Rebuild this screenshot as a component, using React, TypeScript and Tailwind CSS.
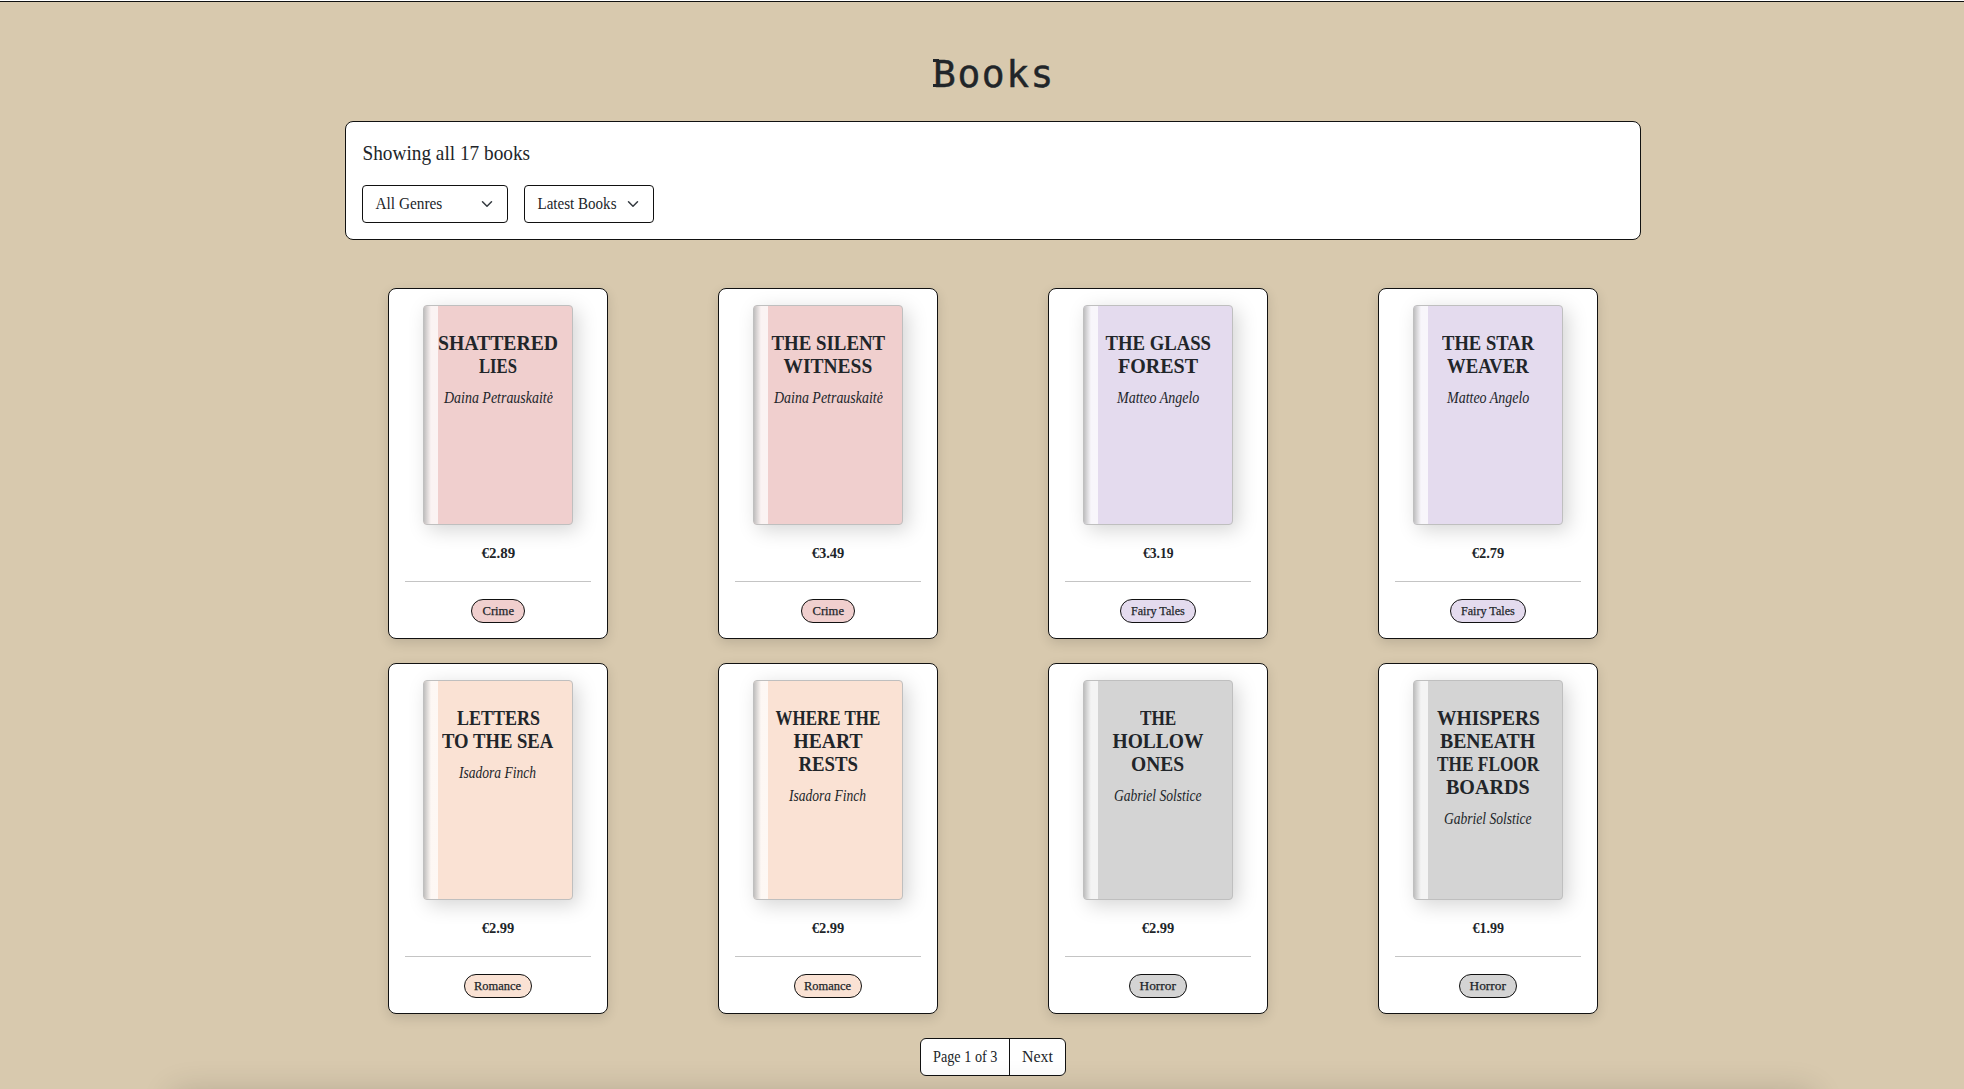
import { useLayoutEffect, useRef, useState } from 'react';

type Line = [text: string, width: number];

type Book = {
  title: Line[];
  author: Line;
  price: Line;
  genre: 'Crime' | 'Fairy Tales' | 'Romance' | 'Horror';
};

const genres = {
  Crime: { bg: 'bg-[#f0cfce]', pill: 'w-[54px]', text: 32 },
  'Fairy Tales': { bg: 'bg-[#e4dbee]', pill: 'w-[76px]', text: 54 },
  Romance: { bg: 'bg-[#fae2d4]', pill: 'w-[68px]', text: 47 },
  Horror: { bg: 'bg-[#d4d4d4]', pill: 'w-[58px]', text: 36 },
};

const books: Book[] = [
  { title: [['Shattered', 120], ['Lies', 38]], author: ['Daina Petrauskaitė', 109], price: ['€2.89', 34], genre: 'Crime' },
  { title: [['The Silent', 114], ['Witness', 89]], author: ['Daina Petrauskaitė', 109], price: ['€3.49', 33], genre: 'Crime' },
  { title: [['The Glass', 105], ['Forest', 80]], author: ['Matteo Angelo', 82], price: ['€3.19', 31], genre: 'Fairy Tales' },
  { title: [['The Star', 92], ['Weaver', 82]], author: ['Matteo Angelo', 82], price: ['€2.79', 33], genre: 'Fairy Tales' },
  { title: [['Letters', 83], ['to the Sea', 111]], author: ['Isadora Finch', 77], price: ['€2.99', 33], genre: 'Romance' },
  { title: [['Where the', 105], ['Heart', 69], ['Rests', 60]], author: ['Isadora Finch', 77], price: ['€2.99', 33], genre: 'Romance' },
  { title: [['The', 36], ['Hollow', 91], ['Ones', 53]], author: ['Gabriel Solstice', 88], price: ['€2.99', 33], genre: 'Horror' },
  {
    title: [['Whispers', 103], ['Beneath', 95], ['the Floor', 102], ['Boards', 84]],
    author: ['Gabriel Solstice', 88],
    price: ['€1.99', 32],
    genre: 'Horror',
  },
];

/** Single line of text condensed or widened to a given measure. */
function Fit({ text, width }: { text: string; width: number }) {
  const ref = useRef<HTMLSpanElement>(null);
  const [scale, setScale] = useState(1);
  useLayoutEffect(() => {
    if (ref.current) setScale(width / ref.current.offsetWidth);
  }, [text, width]);
  return (
    <span className="flex justify-center" style={{ width }}>
      <span ref={ref} className="inline-block shrink-0 whitespace-nowrap" style={{ transform: `scaleX(${scale})` }}>
        {text}
      </span>
    </span>
  );
}

function Select({ label, width, className }: { label: string; width: number; className: string }) {
  return (
    <button className={`flex h-[38px] items-center justify-between rounded border border-[#111] bg-white pr-3 pl-3 text-[16px] leading-6 ${className}`}>
      <Fit text={label} width={width} />
      <svg className="h-3 w-4" viewBox="0 0 16 16" fill="none" stroke="#343a40" strokeWidth="2" strokeLinecap="round" strokeLinejoin="round">
        <path d="m2 5 6 6 6-6" />
      </svg>
    </button>
  );
}

function Card({ book }: { book: Book }) {
  const genre = genres[book.genre];
  return (
    <article className="flex h-[351px] w-[220px] flex-col items-center rounded-lg border border-[#111] bg-white px-4 pt-4 shadow-[0_4px_12px_rgba(0,0,0,0.13)]">
      <div className={`relative flex h-[220px] w-[150px] shrink-0 flex-col items-center rounded border border-[#bfbfbf] pt-[26px] shadow-[5px_5px_20px_rgba(0,0,0,0.17)] ${genre.bg}`}>
        <div className="absolute inset-y-0 left-0 w-[14px] rounded-l-[3px] bg-[linear-gradient(to_right,rgba(190,190,190,0.95)_0px,rgba(255,255,255,0.75)_7px,rgba(255,255,255,0.75)_14px)]" />
        <h2 className="relative flex flex-col items-center text-[21px] leading-[23px] font-bold uppercase">
          {book.title.map(([text, width]) => (
            <Fit key={text} text={text} width={width} />
          ))}
        </h2>
        <p className="relative mt-2 text-[16px] leading-6 italic">
          <Fit text={book.author[0]} width={book.author[1]} />
        </p>
      </div>
      <p className="mt-4 text-[14.5px] leading-6 font-bold">
        <Fit text={book.price[0]} width={book.price[1]} />
      </p>
      <hr className="mt-4 w-full border-[#c4c4c4]" />
      <div className={`mt-[17px] flex h-6 items-center justify-center rounded-full border border-[#111] pb-px text-[13px] leading-none [-webkit-text-stroke:0.25px_#212529] ${genre.pill} ${genre.bg}`}>
        <Fit text={book.genre} width={genre.text} />
      </div>
    </article>
  );
}

export default function App() {
  return (
    <div className="relative h-[1089px] overflow-hidden border-t border-white bg-[#d8c9ae] font-['Liberation_Serif',serif] text-[#212529]">
      <div className="border-t border-[#111]" />
      <main className="flex flex-col items-center pt-[48px] pl-[22px]">
        <h1 className="flex h-12 items-center pl-[2px] font-['DejaVu_Sans_Mono',monospace] text-[38px] leading-12 tracking-[1.5px] [-webkit-text-stroke:0.4px_#212529]">
          <span className="relative before:absolute before:top-[9px] before:left-0 before:h-[3px] before:w-[6px] before:bg-[#212529] after:absolute after:bottom-[11px] after:left-0 after:h-[3px] after:w-[6px] after:bg-[#212529]">
            B
          </span>
          ooks
        </h1>
        <section className="mt-[23px] h-[119px] w-[1296px] rounded-lg border border-[#111] bg-white px-4 pt-4">
          <p className="text-[21px] leading-[31px]">
            <Fit text="Showing all 17 books" width={168} />
          </p>
          <div className="mt-4 flex gap-4">
            <Select label="All Genres" width={67} className="w-[146px]" />
            <Select label="Latest Books" width={79} className="w-[130px]" />
          </div>
        </section>
        <section className="mt-12 grid w-[1320px] grid-cols-4 justify-items-center gap-y-6">
          {books.map((book) => (
            <Card key={book.title[0][0]} book={book} />
          ))}
        </section>
        <nav className="mt-6 flex h-[38px] rounded-md border border-[#111] bg-white text-[16px] leading-9">
          <span className="border-r border-[#111] px-3">
            <Fit text="Page 1 of 3" width={64} />
          </span>
          <a className="px-3">
            <Fit text="Next" width={31} />
          </a>
        </nav>
      </main>
      <div className="absolute top-[1090px] left-[172px] h-20 w-[1642px] rounded-lg shadow-[0_0_32px_rgba(0,0,0,0.16)]" />
    </div>
  );
}
